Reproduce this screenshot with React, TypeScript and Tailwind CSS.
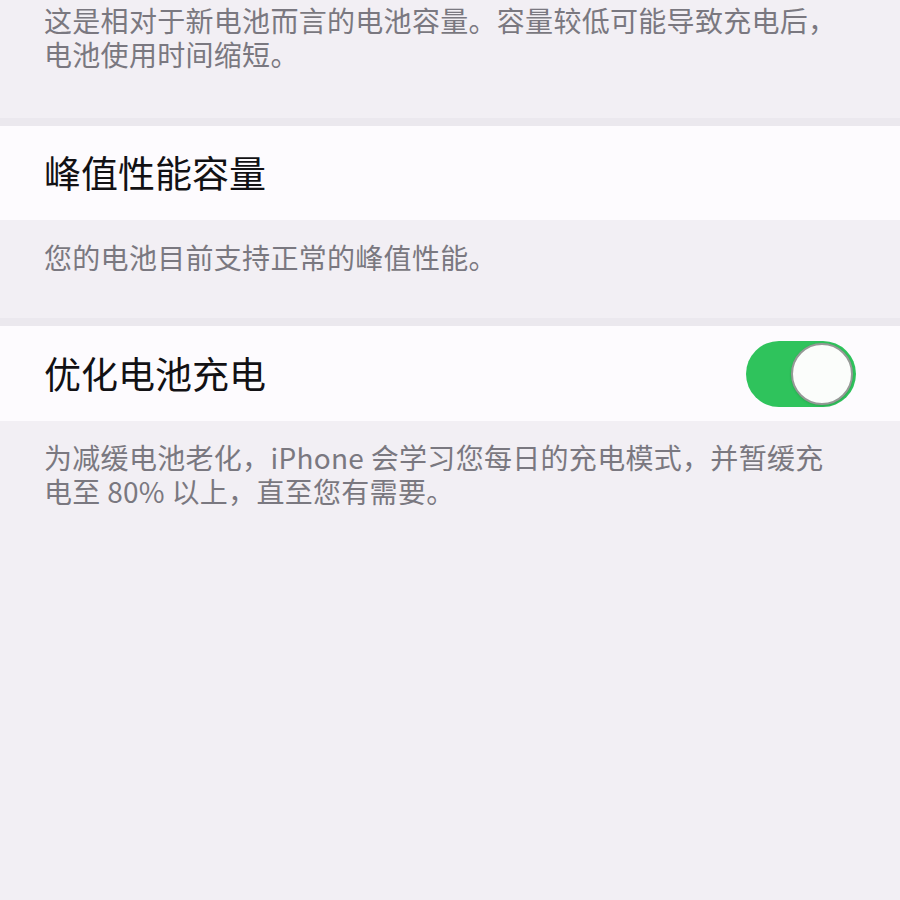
import React, { useState } from 'react';

const font = { fontFamily: '"Noto Sans CJK SC", "Noto Sans", sans-serif' };

// Grey explanatory text under a settings group
const Footer: React.FC<{ className?: string; children: React.ReactNode }> = ({ className = '', children }) => (
    <div className={`px-[44px] text-[28px] leading-[34px] text-[#7a7880] tracking-[0.3px] ${className}`}>
        {children}
    </div>
);

const Toggle: React.FC<{ on: boolean; onChange: () => void }> = ({ on, onChange }) => (
    <button
        onClick={onChange}
        className={`relative w-[110px] h-[66px] rounded-full flex items-center p-[3px] ${on ? 'bg-[#2fc35c] justify-end' : 'bg-[#e5e5ea] justify-start'}`}
    >
        <span className="w-[62px] h-[62px] rounded-full bg-[#fbfdfb] border-[2px] border-[#959996] shadow-sm" />
    </button>
);

const App: React.FC = () => {
    const [optimized, setOptimized] = useState(true);

    return (
        <div style={font} className="min-h-[900px] w-[900px] bg-[#f2eff4]">
            <Footer className="pt-[3px] pb-[47px]">
                这是相对于新电池而言的电池容量。容量较低可能导致充电后，
                <br />
                电池使用时间缩短。
            </Footer>

            <div className="h-[8px] bg-[#ebe8ee]" />
            <div className="h-[94px] bg-[#fdfbfe] flex items-center px-[44px]">
                <span className="text-[37px] text-[#121114]">峰值性能容量</span>
            </div>

            <Footer className="pt-[20px] pb-[44px]">您的电池目前支持正常的峰值性能。</Footer>

            <div className="h-[8px] bg-[#ebe8ee]" />
            <div className="h-[95px] bg-[#fdfbfe] flex items-center justify-between pl-[44px] pr-[44px]">
                <span className="text-[37px] text-[#121114]">优化电池充电</span>
                <Toggle on={optimized} onChange={() => setOptimized(!optimized)} />
            </div>

            <Footer className="pt-[19px]">
                为减缓电池老化，iPhone 会学习您每日的充电模式，并暂缓充
                <br />
                电至 80% 以上，直至您有需要。
            </Footer>
        </div>
    );
};

export default App;
